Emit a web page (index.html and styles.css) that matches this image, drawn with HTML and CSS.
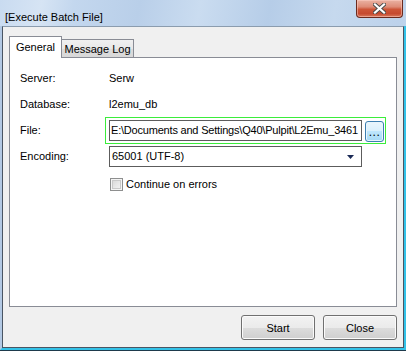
FILE: index.html
```html
<!DOCTYPE html>
<html>
<head>
<meta charset="utf-8">
<link rel="stylesheet" href="styles.css">
</head>
<body>
<div class="window">
  <div class="titlebar">
    <span class="title">[Execute Batch File]</span>
    <div class="close-x">
      <svg width="13" height="11" viewBox="0 0 13 11">
        <path d="M2 1.5 L11 9.5 M11 1.5 L2 9.5" stroke="#4a4a4a" stroke-width="4" stroke-linecap="square" fill="none"/>
        <path d="M2 1.5 L11 9.5 M11 1.5 L2 9.5" stroke="#ffffff" stroke-width="2.2" stroke-linecap="square" fill="none"/>
      </svg>
    </div>
  </div>
  <div class="frame">
    <div class="client">
      <div class="tabs">
        <div class="tab active">General</div>
        <div class="tab">Message Log</div>
      </div>
      <div class="panel">
        <div class="form">
          <div class="label">Server:</div>
          <div class="value">Serw</div>
          <div class="label">Database:</div>
          <div class="value">l2emu_db</div>
          <div class="label">File:</div>
          <div class="focus-ring">
            <div class="textbox">E:\Documents and Settings\Q40\Pulpit\L2Emu_3461</div>
            <div class="browse">...</div>
          </div>
          <div class="label">Encoding:</div>
          <div class="select">
            <span>65001 (UTF-8)</span>
            <svg width="7" height="4" viewBox="0 0 7 4"><path d="M0 0 H7 L3.5 4 Z" fill="#1b2a56"/></svg>
          </div>
          <div></div>
          <label class="check-row"><span class="checkbox"></span>Continue on errors</label>
        </div>
      </div>
      <div class="buttons">
        <button class="btn">Start</button>
        <button class="btn">Close</button>
      </div>
    </div>
  </div>
</div>
</body>
</html>
```

FILE: styles.css
```css
html, body {
  margin: 0;
  padding: 0;
}
body {
  width: 406px;
  height: 351px;
  overflow: hidden;
  font-family: "Liberation Sans", Arial, sans-serif;
  font-size: 11px;
  color: #000;
}
.window {
  width: 406px;
  height: 351px;
  box-sizing: border-box;
  display: flex;
  flex-direction: column;
  border-bottom: 1px solid #1e3a4c;
  background: linear-gradient(100deg, #c9dbf0 0%, #d6e4f4 9%, #c3d7ee 16%, #b9cfe9 30%, #cadcf0 43%, #b6cde8 58%, #c6d9ee 72%, #bdd2eb 86%, #c8dbef 100%);
}
.titlebar {
  height: 26px;
  flex: none;
  display: flex;
  align-items: flex-start;
  justify-content: space-between;
}
.title {
  margin: 11px 0 0 5px;
  line-height: 13px;
  color: #000;
}
.close-x {
  width: 47px;
  height: 18px;
  margin-right: 3px;
  box-sizing: border-box;
  border: 1px solid #6b2a1e;
  border-top: none;
  border-radius: 0 0 4px 4px;
  background: linear-gradient(#eab2a3 0%, #de8c77 40%, #cd5538 55%, #c64a30 80%, #d8785c 100%);
  display: flex;
  align-items: center;
  justify-content: center;
  box-shadow: inset 0 0 0 1px rgba(255, 210, 200, 0.5);
}
.frame {
  flex: 1;
  display: flex;
  border-left: 2px solid #b3c9e4;
  border-right: 2px solid #33c2e8;
  border-bottom: 2px solid #33c2e8;
}
.client {
  flex: 1;
  border: 1px solid #4a5563;
  border-top-color: #8b9cae;
  background: #f0f0f0;
  padding: 9px 6px 0 6px;
  display: flex;
  flex-direction: column;
}
.tabs {
  display: flex;
  align-items: flex-end;
  height: 21px;
}
.tab {
  box-sizing: border-box;
  border: 1px solid #898c95;
  border-bottom: none;
  text-align: center;
  line-height: 15px;
}
.tab.active {
  width: 53px;
  height: 22px;
  margin-bottom: -1px;
  background: #fff;
  position: relative;
  z-index: 1;
  padding-top: 3px;
}
.tab:not(.active) {
  width: 73px;
  height: 18px;
  margin-left: -1px;
  background: linear-gradient(#f0f0f0 0%, #e8e8e8 50%, #dcdcdc 50%, #d8d8d8 100%);
  padding-top: 2px;
}
.panel {
  box-sizing: border-box;
  width: 388px;
  height: 250px;
  border: 1px solid #898c95;
  background: #fff;
  padding: 7px 10px;
}
.form {
  display: grid;
  grid-template-columns: 85px 1fr;
  grid-auto-rows: 26px;
  align-items: center;
}
.label, .value {
  line-height: 13px;
  padding-top: 1px;
}
.value {
  padding-left: 4px;
}
.focus-ring {
  box-sizing: border-box;
  width: 281px;
  height: 27px;
  border: 1px solid #3bed3b;
  display: flex;
  align-items: flex-start;
  padding: 2px 0 0 3px;
  gap: 3px;
}
.textbox {
  box-sizing: border-box;
  width: 253px;
  height: 21px;
  border: 1px solid #5c5c5c;
  background: #fff;
  padding: 3px 0 0 1px;
  white-space: nowrap;
  overflow: hidden;
  line-height: 13px;
  letter-spacing: -0.2px;
}
.browse {
  box-sizing: border-box;
  width: 19px;
  height: 21px;
  margin-top: 1px;
  border: 1px solid #3c7fb1;
  border-radius: 3px;
  background: linear-gradient(#eaf6fd 0%, #d9f0fc 50%, #bee6fd 50%, #a7d9f5 100%);
  box-shadow: inset 0 0 0 1px #e8f5fc;
  text-align: center;
  line-height: 13px;
  padding-top: 4px;
  font-size: 12px;
  letter-spacing: 0.5px;
}
.select {
  box-sizing: border-box;
  width: 253px;
  height: 21px;
  margin-left: 4px;
  border: 1px solid #5c5c5c;
  background: #fff;
  display: flex;
  align-items: center;
  justify-content: space-between;
  padding: 0 7px 0 2px;
  line-height: 13px;
}
.select svg {
  margin-top: 2px;
}
.check-row {
  display: flex;
  align-items: center;
  gap: 2px;
  margin-left: 5px;
  margin-top: 5px;
  line-height: 13px;
}
.checkbox {
  box-sizing: border-box;
  width: 13px;
  height: 13px;
  border: 1px solid #8e8f8f;
  background: linear-gradient(135deg, #d4d4d4 0%, #e6e6e6 50%, #f6f6f6 100%);
  box-shadow: inset 0 0 0 1px #f4f4f4, inset 0 0 0 2px #c9c9c9;
  margin-right: 1px;
}
.buttons {
  display: flex;
  justify-content: flex-end;
  gap: 8px;
  margin-top: 8px;
}
.btn {
  box-sizing: border-box;
  width: 74px;
  height: 25px;
  border: 1px solid #707070;
  border-radius: 3px;
  background: linear-gradient(#f2f2f2 0%, #ebebeb 50%, #dddddd 50%, #cfcfcf 100%);
  box-shadow: inset 0 0 0 1px #fbfbfb;
  font-family: "Liberation Sans", Arial, sans-serif;
  font-size: 11px;
  color: #000;
  padding: 0;
}
```
